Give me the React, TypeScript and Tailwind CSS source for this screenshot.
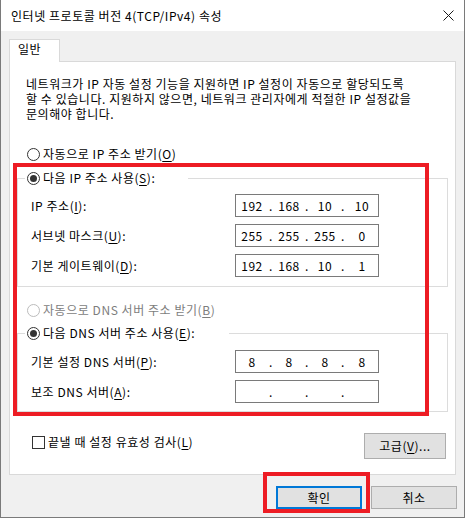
import React from "react";

function U({ c }: { c: string }) {
  return <span className="underline underline-offset-[2px]">{c}</span>;
}

function Radio({ checked, disabled }: { checked?: boolean; disabled?: boolean }) {
  return (
    <span
      className={`flex h-[13px] w-[13px] shrink-0 items-center justify-center rounded-full border bg-white ${
        disabled ? "border-[#bcbcbc]" : "border-[#333333]"
      }`}
    >
      {checked && <span className="h-[7px] w-[7px] rounded-full bg-[#333333]" />}
    </span>
  );
}

function IpBox({ v }: { v: string[] }) {
  return (
    <div className="flex h-[23px] w-[144px] items-center border border-[#7a7a7a] bg-white text-[12px] leading-[16px]">
      <span className="w-[32px] text-center">{v[0]}</span>
      <span className="w-[6px] text-center">.</span>
      <span className="w-[30px] text-center">{v[1]}</span>
      <span className="w-[6px] text-center">.</span>
      <span className="w-[30px] text-center">{v[2]}</span>
      <span className="w-[6px] text-center">.</span>
      <span className="w-[32px] text-center">{v[3]}</span>
    </div>
  );
}

function Row({ label, v }: { label: React.ReactNode; v: string[] }) {
  return (
    <div className="flex h-[23px] items-center">
      <span className="w-[204px]">{label}</span>
      <IpBox v={v} />
    </div>
  );
}

export default function App() {
  return (
    <div className="relative flex h-[518px] w-[465px] flex-col border-x border-b border-[#7a7a7a] bg-[#f0f0f0] font-['Noto_Sans_CJK_KR',sans-serif] text-[12px] leading-[16px] tracking-[0.55px] text-black">
      {/* Title bar */}
      <div className="flex h-[31px] shrink-0 items-center justify-between bg-white pl-[10px] pr-[10px]">
        <span className="text-[12px]">인터넷 프로토콜 버전 4(TCP/IPv4) 속성</span>
        <svg width="11" height="11" viewBox="0 0 11 11" className="text-[#1a1a1a]">
          <path d="M0.5 0.5 L10.5 10.5 M10.5 0.5 L0.5 10.5" stroke="currentColor" strokeWidth="1" />
        </svg>
      </div>

      {/* Body */}
      <div className="flex flex-col pt-[8px]">
        {/* Tab */}
        <div className="relative z-10 -mb-px ml-[8px] flex h-[23px] w-[51px] items-start border-x border-t border-[#d9d9d9] bg-white pl-[8px] pt-[1px]">
          <span>일반</span>
        </div>

        {/* Panel */}
        <div className="ml-[8px] flex w-[447px] flex-col border border-[#d9d9d9] bg-white pb-[15px] pt-[14px]">
          <div className="flex flex-col pl-[16px]">
            <span className="h-[15px] leading-[15px]">
              네트워크가 IP 자동 설정 기능을 지원하면 IP 설정이 자동으로 할당되도록
            </span>
            <span className="h-[15px] leading-[15px]">
              할 수 있습니다. 지원하지 않으면, 네트워크 관리자에게 적절한 IP 설정값을
            </span>
            <span className="h-[15px] leading-[15px]">문의해야 합니다.</span>
          </div>

          <div className="mt-[25px] flex h-[16px] items-center gap-[3px] pl-[17px]">
            <Radio />
            <span>
              자동으로 IP 주소 받기(<U c="O" />)
            </span>
          </div>

          <fieldset className="ml-[7px] mr-[7px] mt-[8px] border border-[#dcdcdc]">
            <legend className="ml-[7px] w-[163px] bg-white pl-[2px]">
              <span className="flex h-[16px] items-center gap-[3px]">
                <Radio checked />
                <span>
                  다음 IP 주소 사용(<U c="S" />):
                </span>
              </span>
            </legend>
            <div className="flex flex-col gap-[7px] pb-[9px] pl-[13px] pt-[8px]">
              <Row
                label={
                  <>
                    IP 주소(<U c="I" />):
                  </>
                }
                v={["192", "168", "10", "10"]}
              />
              <Row
                label={
                  <>
                    서브넷 마스크(<U c="U" />):
                  </>
                }
                v={["255", "255", "255", "0"]}
              />
              <Row
                label={
                  <>
                    기본 게이트웨이(<U c="D" />):
                  </>
                }
                v={["192", "168", "10", "1"]}
              />
            </div>
          </fieldset>

          <div className="mt-[15px] flex h-[16px] items-center gap-[3px] pl-[17px] text-[#7d7d7d]">
            <Radio disabled />
            <span>
              자동으로 DNS 서버 주소 받기(<U c="B" />)
            </span>
          </div>

          <fieldset className="ml-[7px] mr-[7px] mt-[7px] border border-[#dcdcdc]">
            <legend className="ml-[7px] w-[204px] bg-white pl-[2px]">
              <span className="flex h-[16px] items-center gap-[3px]">
                <Radio checked />
                <span>
                  다음 DNS 서버 주소 사용(<U c="E" />):
                </span>
              </span>
            </legend>
            <div className="flex flex-col gap-[7px] pb-[8px] pl-[13px] pt-[9px]">
              <Row
                label={
                  <>
                    기본 설정 DNS 서버(<U c="P" />):
                  </>
                }
                v={["8", "8", "8", "8"]}
              />
              <Row
                label={
                  <>
                    보조 DNS 서버(<U c="A" />):
                  </>
                }
                v={["", "", "", ""]}
              />
            </div>
          </fieldset>

          <div className="mt-[21px] flex items-start justify-between pl-[22px] pr-[9px]">
            <div className="mt-[1px] flex h-[16px] items-center gap-[3px]">
              <span className="h-[13px] w-[13px] border border-[#333333] bg-white" />
              <span>
                끝낼 때 설정 유효성 검사(<U c="L" />)
              </span>
            </div>
            <button className="flex h-[26px] w-[82px] items-center justify-center border border-[#adadad] bg-[#e1e1e1]">
              <span>
                고급(<U c="V" />)...
              </span>
            </button>
          </div>
        </div>

        {/* Bottom buttons */}
        <div className="mt-[11px] flex justify-end gap-[9px] pr-[7px]">
          <button className="flex h-[23px] w-[86px] items-center justify-center border-2 border-[#0078d7] bg-[#e1e1e1]">
            확인
          </button>
          <button className="flex h-[23px] w-[86px] items-center justify-center border border-[#adadad] bg-[#e1e1e1]">
            취소
          </button>
        </div>
      </div>

      {/* Red annotation highlights */}
      <div className="pointer-events-none absolute left-[12px] top-[163px] h-[253px] w-[416px] border-4 border-[#ed1c24]" />
      <div className="pointer-events-none absolute left-[262px] top-[472px] h-[41px] w-[107px] border-4 border-[#ed1c24]" />
    </div>
  );
}
